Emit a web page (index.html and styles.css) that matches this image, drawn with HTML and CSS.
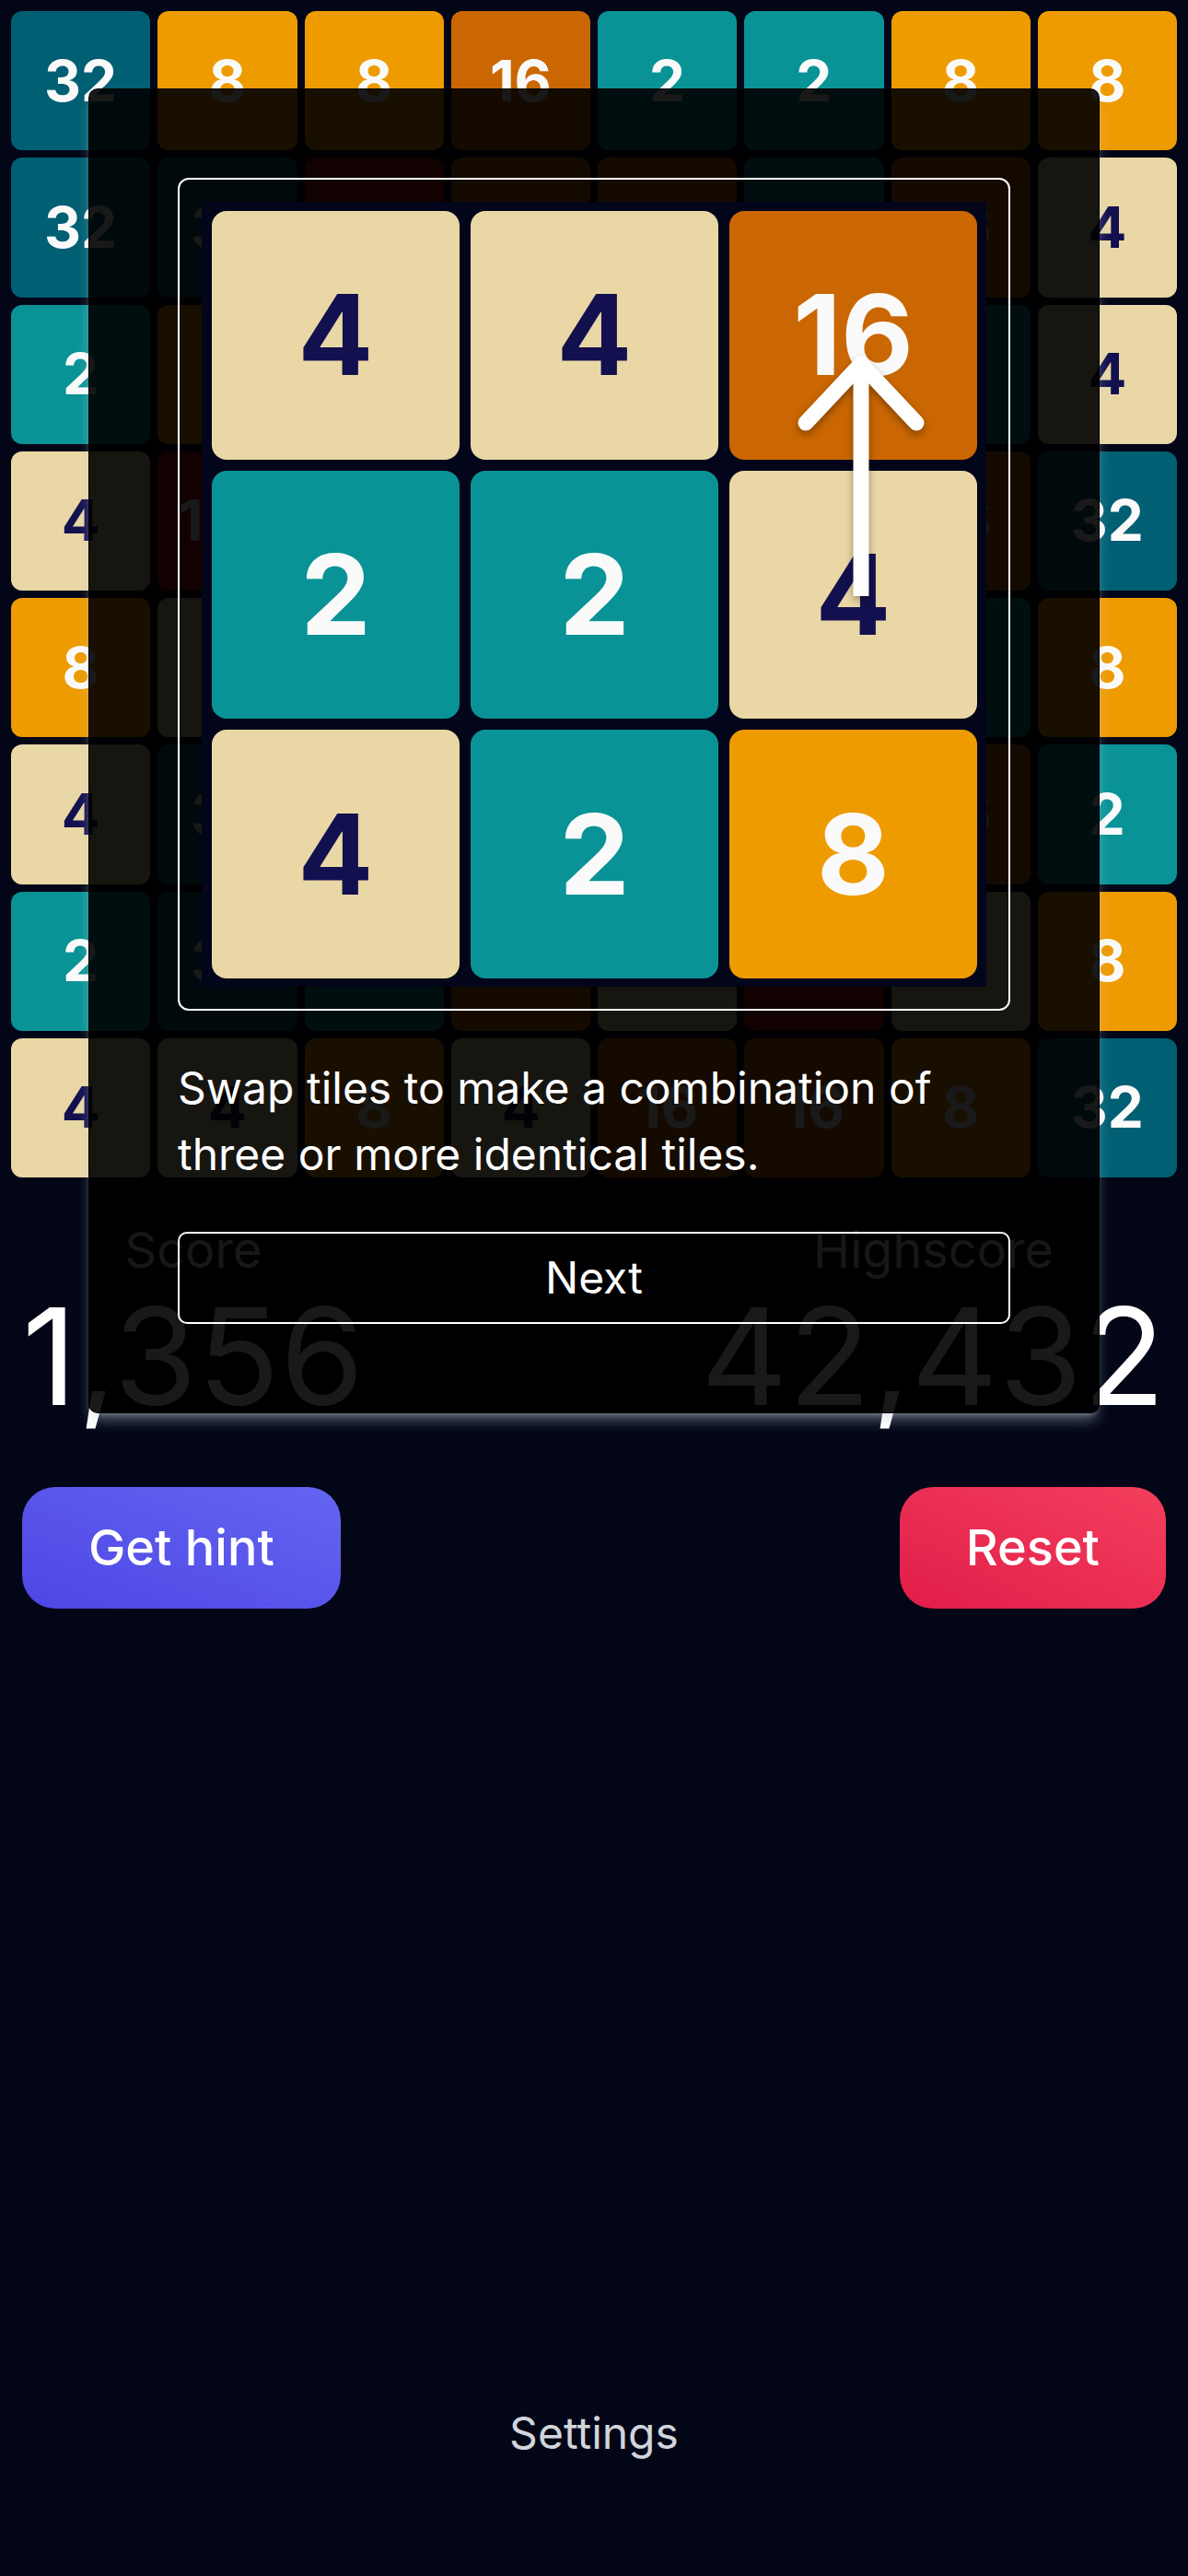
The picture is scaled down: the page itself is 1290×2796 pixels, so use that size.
FILE: index.html
```
<!DOCTYPE html>
<html lang="en">
<head>
<meta charset="utf-8">
<title>Tiles</title>
<link rel="stylesheet" href="styles.css">
</head>
<body>
<div class="app">
  <div class="board">
    <div class="tile v32">32</div><div class="tile v8">8</div><div class="tile v8">8</div><div class="tile v16">16</div><div class="tile v2">2</div><div class="tile v2">2</div><div class="tile v8">8</div><div class="tile v8">8</div>
    <div class="tile v32">32</div><div class="tile v32">32</div><div class="tile v128">128</div><div class="tile v16">16</div><div class="tile v16">16</div><div class="tile v2">2</div><div class="tile v16">16</div><div class="tile v4">4</div>
    <div class="tile v2">2</div><div class="tile v8">8</div><div class="tile v4">4</div><div class="tile v2">2</div><div class="tile v8">8</div><div class="tile v4">4</div><div class="tile v2">2</div><div class="tile v4">4</div>
    <div class="tile v4">4</div><div class="tile v128">128</div><div class="tile v2">2</div><div class="tile v8">8</div><div class="tile v4">4</div><div class="tile v16">16</div><div class="tile v16">16</div><div class="tile v32">32</div>
    <div class="tile v8">8</div><div class="tile v4">4</div><div class="tile v16">16</div><div class="tile v4">4</div><div class="tile v2">2</div><div class="tile v8">8</div><div class="tile v2">2</div><div class="tile v8">8</div>
    <div class="tile v4">4</div><div class="tile v32">32</div><div class="tile v8">8</div><div class="tile v2">2</div><div class="tile v16">16</div><div class="tile v4">4</div><div class="tile v16">16</div><div class="tile v2">2</div>
    <div class="tile v2">2</div><div class="tile v32">32</div><div class="tile v2">2</div><div class="tile v16">16</div><div class="tile v4">4</div><div class="tile v128">128</div><div class="tile v4">4</div><div class="tile v8">8</div>
    <div class="tile v4">4</div><div class="tile v4">4</div><div class="tile v8">8</div><div class="tile v4">4</div><div class="tile v16">16</div><div class="tile v16">16</div><div class="tile v8">8</div><div class="tile v32">32</div>
  </div>

  <div class="scores">
    <div class="score">
      <div class="score-label">Score</div>
      <div class="score-value">1,356</div>
    </div>
    <div class="score">
      <div class="score-label">Highscore</div>
      <div class="score-value">42,432</div>
    </div>
  </div>

  <div class="actions">
    <button class="btn btn-hint">Get hint</button>
    <button class="btn btn-reset">Reset</button>
  </div>

  <div class="settings">Settings</div>
</div>

<div class="modal">
  <div class="preview">
    <div class="mini">
      <div class="mini-tile v4">4</div>
      <div class="mini-tile v4">4</div>
      <div class="mini-tile v16">16</div>
      <div class="mini-tile v2">2</div>
      <div class="mini-tile v2">2</div>
      <div class="mini-tile v4">4</div>
      <div class="mini-tile v4">4</div>
      <div class="mini-tile v2">2</div>
      <div class="mini-tile v8">8</div>
      <svg class="arrow" viewBox="0 0 852 852" xmlns="http://www.w3.org/2000/svg">
        <path d="M716 428 V182" stroke="#ffffff" stroke-width="17" fill="none" stroke-linecap="butt"/>
        <polyline points="656,240 716,176 776,240" stroke="#ffffff" stroke-width="17" fill="none" stroke-linecap="round" stroke-linejoin="round"/>
      </svg>
    </div>
  </div>
  <p class="tip">Swap tiles to make a combination of three or more identical tiles.</p>
  <button class="next">Next</button>
</div>
</body>
</html>
```

FILE: styles.css
```
* {
  box-sizing: border-box;
}

html, body {
  margin: 0;
  padding: 0;
}

body {
  background: #020617;
  font-family: Inter, "Noto Sans", "Liberation Sans", sans-serif;
  color: #ffffff;
  width: 1290px;
  min-height: 2796px;
  position: relative;
}

.app {
  min-height: 2796px;
  display: flex;
  flex-direction: column;
}

.board {
  padding: 12px;
  display: grid;
  grid-template-columns: repeat(8, 1fr);
  grid-auto-rows: 151.25px;
  gap: 8px;
}

.tile {
  border-radius: 12px;
  display: flex;
  align-items: center;
  justify-content: center;
  font-weight: 700;
  font-size: 62px;
  line-height: 1;
  color: #fafafa;
}

.v2 { background: #0a9396; }
.v4 { background: #e9d8a6; color: #13104f; }
.v8 { background: #ee9b00; }
.v16 { background: #ca6702; }
.v32 { background: #005f73; }
.v128 { background: #a81d0c; }

.scores {
  margin-top: 25px;
  padding: 0 24px;
  display: flex;
  justify-content: space-between;
}

.score {
  display: flex;
  flex-direction: column;
  align-items: center;
}

.score-label {
  font-size: 54px;
  line-height: 84px;
  color: #e5e7eb;
}

.score-value {
  font-size: 146px;
  line-height: 146px;
  font-weight: 400;
  letter-spacing: 1px;
  color: #ffffff;
}

.actions {
  margin-top: 69px;
  padding: 0 24px;
  display: flex;
  justify-content: space-between;
}

.btn {
  border: none;
  font-family: inherit;
  font-size: 54px;
  line-height: 84px;
  font-weight: 500;
  color: #ffffff;
  padding: 24px 72px;
  border-radius: 36px;
}

.btn-hint {
  background: linear-gradient(to top right, #4f46e5, #6366f1);
}

.btn-reset {
  background: linear-gradient(to top right, #e11d48, #f43f5e);
}

.settings {
  margin-top: auto;
  padding-bottom: 119px;
  text-align: center;
  font-size: 48px;
  line-height: 72px;
  color: #d1d5db;
}

.modal {
  position: absolute;
  top: 96px;
  left: 96px;
  width: 1098px;
  padding: 96px;
  border: 1px solid rgba(0, 0, 0, 0.9);
  border-radius: 10px;
  background: rgba(0, 0, 0, 0.9);
  box-shadow: 0 10px 15px -3px rgba(203, 213, 225, 0.45), 0 4px 6px -4px rgba(203, 213, 225, 0.45);
}

.preview {
  border: 2px solid #ffffff;
  border-radius: 12px;
  padding: 24px;
}

.mini {
  position: relative;
  aspect-ratio: 1 / 1;
  background: #03061a;
  padding: 10px 10px 9px 11px;
  display: grid;
  grid-template-columns: repeat(3, 1fr);
  grid-template-rows: repeat(3, 1fr);
  gap: 12px;
}

.mini-tile {
  border-radius: 16px;
  display: flex;
  align-items: center;
  justify-content: center;
  font-weight: 700;
  font-size: 121px;
  line-height: 1;
  color: #fafafa;
}

.mini-tile.v4 {
  color: #13104f;
}

.arrow {
  position: absolute;
  left: 0;
  top: 0;
  width: 100%;
  height: 100%;
  filter: drop-shadow(0 4px 4px rgba(0, 0, 0, 0.35));
}

.tip {
  margin: 48px 0 0;
  font-size: 48px;
  line-height: 72px;
  color: #ffffff;
}

.next {
  display: block;
  width: 100%;
  margin-top: 48px;
  background: transparent;
  border: 2px solid #ffffff;
  border-radius: 10px;
  padding: 12px 0;
  font-family: inherit;
  font-size: 48px;
  line-height: 72px;
  color: #ffffff;
}
```
